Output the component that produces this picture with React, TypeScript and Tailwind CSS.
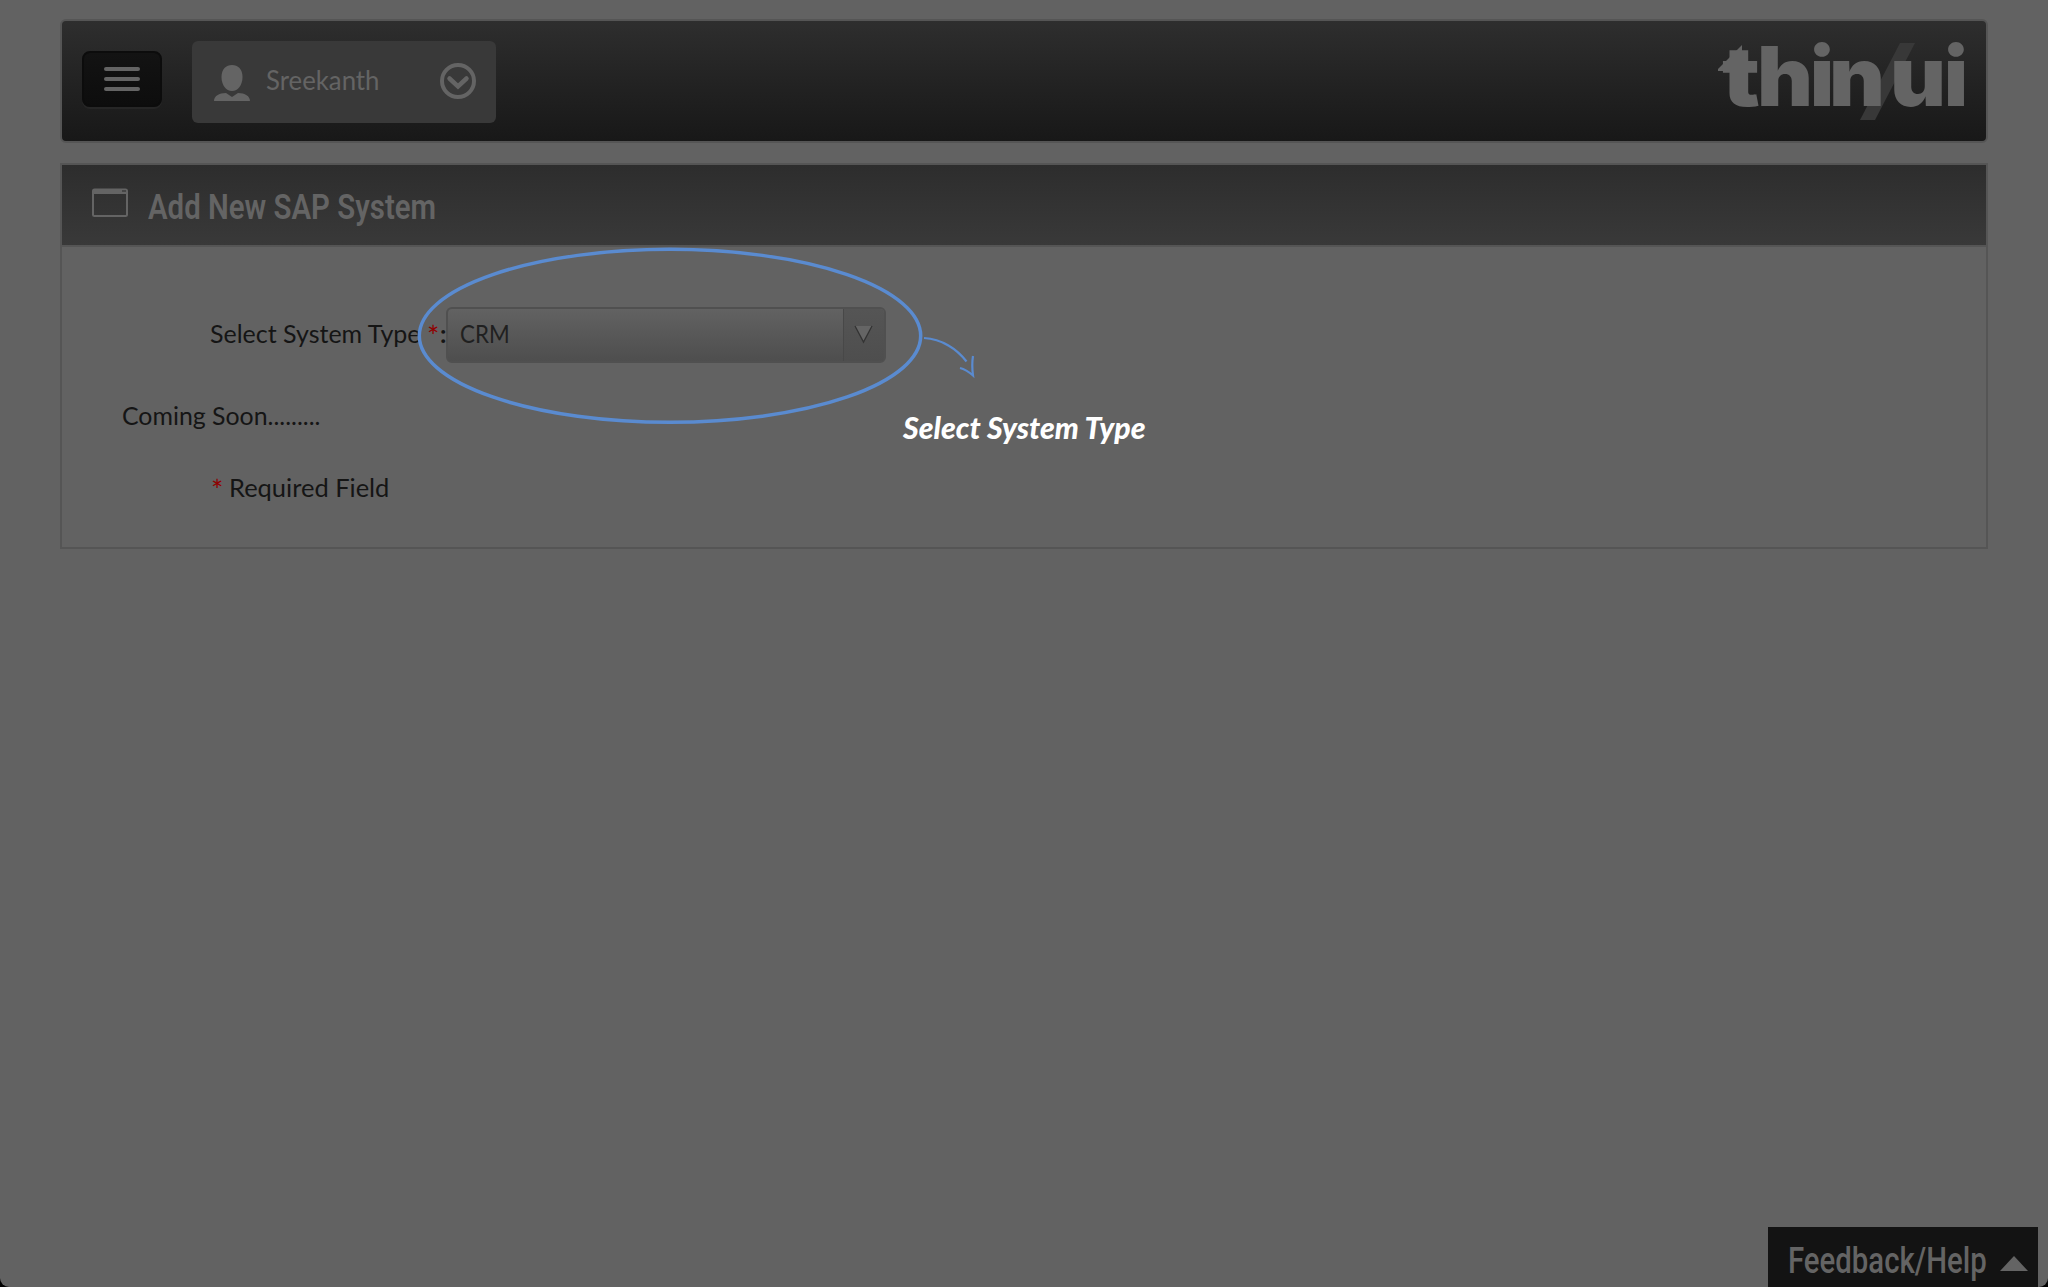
import { useLayoutEffect, useRef, useState } from "react";

type FitTextProps = { text: string; width: number; className?: string };

// Single line of text condensed or stretched to an exact width.
function FitText({ text, width, className = "" }: FitTextProps) {
  const ref = useRef<HTMLSpanElement>(null);
  const [scale, setScale] = useState(1);
  useLayoutEffect(() => {
    if (ref.current) setScale(width / ref.current.offsetWidth);
  }, [width, text]);
  return (
    <span className="block shrink-0" style={{ width }}>
      <span
        ref={ref}
        className={"inline-block origin-left whitespace-nowrap align-top " + className}
        style={{ transform: `scaleX(${scale})` }}
      >
        {text}
      </span>
    </span>
  );
}

function Logo() {
  return (
    <svg className="h-[120px] w-[270px]" viewBox="1716 21 270 120">
      <polygon points="1900,43 1915,43 1875,120 1860,120" fill="#383838" />
      <polygon points="1718,69 1742,45 1742,71 1718,71" fill="#646464" />
      <g fill="#646464" fontFamily="Inter" fontWeight="900" fontSize="82">
        <text y="105.5" x="1722" textLength="38" lengthAdjust="spacingAndGlyphs">t</text>
        <text y="105.5" x="1757" textLength="56" lengthAdjust="spacingAndGlyphs">h</text>
        <text y="105.5" x="1810" textLength="24" lengthAdjust="spacingAndGlyphs">i</text>
        <text y="105.5" x="1829" textLength="56" lengthAdjust="spacingAndGlyphs">n</text>
        <text y="105.5" x="1890" textLength="56" lengthAdjust="spacingAndGlyphs">u</text>
        <text y="105.5" x="1944" textLength="24" lengthAdjust="spacingAndGlyphs">i</text>
      </g>
    </svg>
  );
}

function TopBar() {
  return (
    <header className="flex h-[124px] items-start rounded-[6px] border-2 border-[#555] bg-linear-to-b from-[#2e2e2e] to-[#181818]">
      <button className="mt-[30px] ml-[20px] flex h-[56px] w-[80px] flex-col items-center justify-center gap-[6px] rounded-[8px] border-2 border-[#0c0c0c] bg-linear-to-b from-[#131313] to-[#0d0d0d] shadow-[0_2px_0_#262626]">
        <span className="h-1 w-9 rounded-sm bg-[#646464]" />
        <span className="h-1 w-9 rounded-sm bg-[#646464]" />
        <span className="h-1 w-9 rounded-sm bg-[#646464]" />
      </button>
      <div className="mt-[20px] ml-[30px] flex h-[82px] w-[304px] items-center rounded-[6px] bg-[#393939] pl-[22px] text-[#646464]">
        <svg className="mt-[2px] h-9 w-9" viewBox="0 0 36 36" fill="#646464">
          <path d="M18 0C24 0 28.5 4 28.5 12C28.5 20 24 26 18 26C12 26 7.500 20 7.500 12C7.500 4 12 0 18 0Z" />
          <path d="M0 36C0 31 5 28 12 28L18 32L24 28C31 28 36 31 36 36Z" />
        </svg>
        <div className="-mt-[5px] ml-[16px]">
          <FitText text="Sreekanth" width={114} className="text-[26px] leading-[30px]" />
        </div>
        <svg className="-mt-[2px] ml-[60px] h-9 w-9" viewBox="0 0 36 36" fill="none" stroke="#646464">
          <circle cx="18" cy="18" r="16" strokeWidth="4" />
          <path d="M9.500 15.500L18 23.500L26.500 15.500" strokeWidth="4.500" strokeLinecap="round" />
        </svg>
      </div>
      <div className="ml-auto">
        <Logo />
      </div>
    </header>
  );
}

function SystemSelect() {
  return (
    <div className="flex h-[56px] w-[440px] overflow-hidden rounded-[6px] border-2 border-[#505050] bg-linear-to-b from-[#626262] to-[#4e4e4e]">
      <div className="flex-1 pt-[9px] pl-[12px]">
        <FitText text="CRM" width={50} className="text-[25px] leading-[30px] text-[#202020]" />
      </div>
      <div className="flex w-[41px] justify-center border-l border-[#484848] bg-linear-to-b from-[#555] to-[#4e4e4e]">
        <svg className="mt-[16px] h-[19px] w-[20px]" viewBox="0 0 20 19">
          <path d="M1 1H18L9.500 17Z" fill="#656565" />
          <path d="M1 1L9.500 17L18 1" fill="none" stroke="#333" strokeWidth="1.300" />
        </svg>
      </div>
    </div>
  );
}

function SystemPanel() {
  return (
    <section className="mt-[20px] h-[386px] border-2 border-[#555]">
      <div className="flex h-[82px] border-b-2 border-[#555] bg-linear-to-b from-[#2d2d2d] to-[#393939]">
        <svg className="mt-[23px] ml-[30px] h-[29px] w-9" viewBox="0 0 36 29">
          <rect x="1" y="1.500" width="34" height="26.500" rx="1.500" fill="none" stroke="#646464" strokeWidth="2" />
          <path d="M1 1H35V6H1Z" fill="#646464" />
          <path d="M30 3H34" stroke="#3c3c3c" strokeWidth="1.500" />
        </svg>
        <h1 className="mt-[21px] ml-[20px]">
          <FitText
            text="Add New SAP System"
            width={288}
            className="font-[Roboto] text-[35.5px] leading-[42px] font-semibold text-[#646464]"
          />
        </h1>
      </div>
      <div className="flex pt-[60px] pl-[148px] text-[25px] leading-[30px] text-[#151515]">
        <div className="flex pt-[11px]">
          <FitText text="Select System Type" width={211} />
          <span className="ml-[6px] w-[13px] pt-[3px] text-[29px] text-[#900000]">*</span>
          <span className="w-[6px] font-bold">:</span>
        </div>
        <SystemSelect />
      </div>
      <div className="mt-[37px] pl-[60px] text-[25px] leading-[30px] text-[#151515]">
        <FitText text="Coming Soon........." width={198} />
      </div>
      <div className="mt-[42px] flex pl-[149px] text-[25px] leading-[30px] text-[#151515]">
        <span className="w-[18px] pt-[3px] text-[29px] text-[#900000]">*</span>
        <FitText text="Required Field" width={160} />
      </div>
    </section>
  );
}

function TourOverlay() {
  return (
    <div className="pointer-events-none absolute inset-0">
      <svg className="absolute top-[240px] left-[410px] h-[190px] w-[580px]" viewBox="410 240 580 190" fill="none" stroke="#5a8bd0">
        <ellipse cx="670" cy="335.800" rx="250.700" ry="86.500" strokeWidth="3.500" />
        <path d="M924 338C942 339 957 349 966.500 361.500" strokeWidth="2.200" />
        <path d="M960 368C964 369 969 372 973 375.500C972 368 972 362 973 356" strokeWidth="2.200" />
      </svg>
      <div className="absolute top-[409px] left-[903px] text-white">
        <FitText text="Select System Type" width={242} className="text-[31px] leading-[36px] font-black italic" />
      </div>
    </div>
  );
}

function FeedbackTab() {
  return (
    <div className="absolute right-[10px] bottom-0 flex h-[60px] w-[270px] bg-[#131313] pl-[20px]">
      <div className="mt-[13px]">
        <FitText
          text="Feedback/Help"
          width={199}
          className="font-[Roboto] text-[36px] leading-[42px] font-medium text-[#646464]"
        />
      </div>
      <svg className="mt-[29px] ml-[13px] h-[15px] w-[28px]" viewBox="0 0 28 15">
        <path d="M14 0L28 15H0Z" fill="#646464" />
      </svg>
    </div>
  );
}

export default function App() {
  return (
    <div className="bg-black">
      <div className="relative h-[1287px] w-[2048px] overflow-hidden rounded-b-[9px] bg-[#626262] px-[60px] pt-[19px] font-[Lato]">
        <TopBar />
        <SystemPanel />
        <TourOverlay />
        <FeedbackTab />
      </div>
    </div>
  );
}
